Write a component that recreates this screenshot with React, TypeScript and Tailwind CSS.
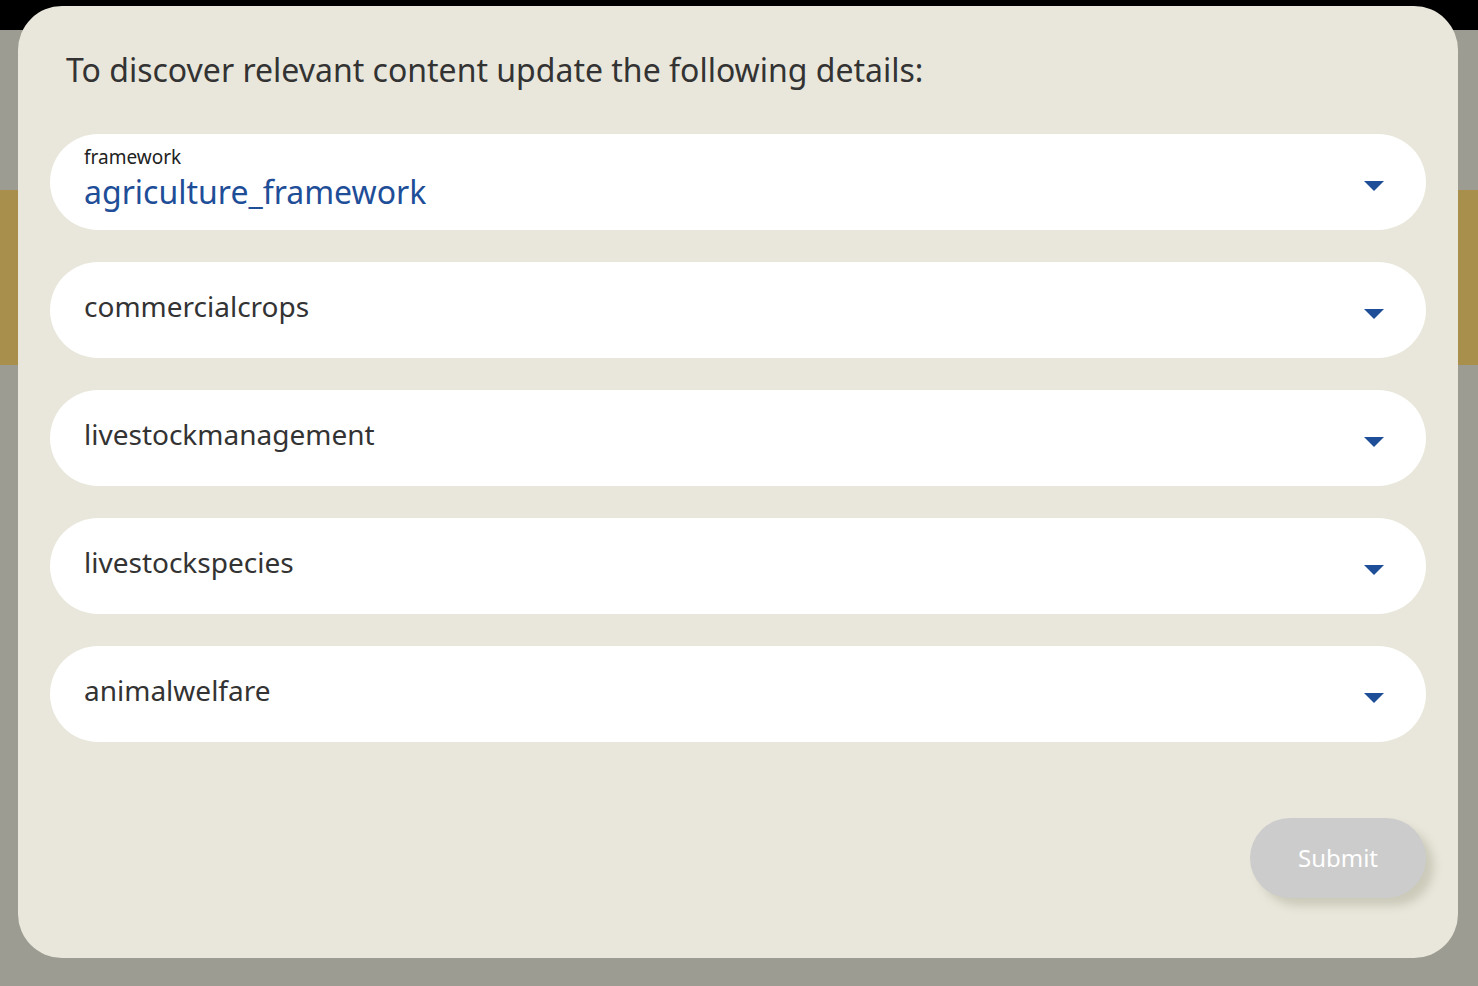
import { ReactNode } from 'react'

const fields = [
  { id: 'framework', label: 'framework', value: 'agriculture_framework' },
  { id: 'commercialcrops', label: 'commercialcrops' },
  { id: 'livestockmanagement', label: 'livestockmanagement' },
  { id: 'livestockspecies', label: 'livestockspecies' },
  { id: 'animalwelfare', label: 'animalwelfare' },
]

function Caret() {
  return (
    <svg width="20" height="10" viewBox="0 0 20 10" className="shrink-0">
      <path d="M0 0 H20 L10 10 Z" fill="#1f4e98" />
    </svg>
  )
}

function SelectPill({ children }: { children: ReactNode }) {
  return (
    <div className="h-[96px] rounded-full bg-white flex items-center pl-[34px] pr-[42px]">
      <div className="flex-1 min-w-0">{children}</div>
      <div className="mt-[8px]">
        <Caret />
      </div>
    </div>
  )
}

export default function App() {
  return (
    <div
      className="relative w-[1478px] h-[986px] overflow-hidden bg-[#9c9c93]"
      style={{ fontFamily: '"Noto Sans", "Open Sans", sans-serif' }}
    >
      {/* page behind the dialog */}
      <div className="h-[30px] bg-black" />
      <div className="h-[160px]" />
      <div className="h-[175px] bg-[#a88f4b]" />

      <div className="absolute left-[18px] top-[6px] w-[1440px] h-[952px] rounded-[44px] bg-[#e9e7db] px-[32px] pt-[42px]">
        <h2 className="pl-[16px] text-[32px] leading-[44px] text-[#333333]">
          To discover relevant content update the following details:
        </h2>

        <div className="mt-[42px] flex flex-col gap-[32px]">
          {fields.map((f) =>
            f.value ? (
              <SelectPill key={f.id}>
                <div className="-mt-[5px]">
                  <div className="text-[19px] leading-[20px] text-[#222222] mb-[5px]">{f.label}</div>
                  <div className="text-[32px] leading-[40px] text-[#1f4e98]">{f.value}</div>
                </div>
              </SelectPill>
            ) : (
              <SelectPill key={f.id}>
                <div className="text-[28px] leading-[38px] text-[#333333] -mt-[8px]">{f.label}</div>
              </SelectPill>
            )
          )}
        </div>

        <div className="mt-[76px] flex justify-end">
          <button className="w-[176px] h-[80px] rounded-full bg-[#cccccc] text-white text-[24px] shadow-[8px_8px_8px_rgba(120,120,90,0.25)]">
            Submit
          </button>
        </div>
      </div>
    </div>
  )
}
